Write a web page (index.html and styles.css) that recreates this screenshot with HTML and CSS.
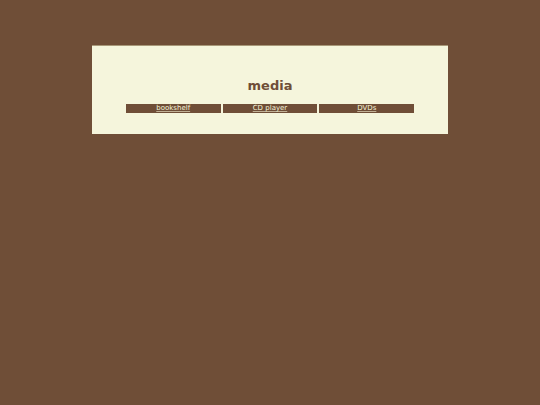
FILE: index.html
```
<!DOCTYPE html>
<html lang="en">
<head>
	<meta charset="UTF-8">
	<title>media</title>
	<link rel="stylesheet" href="styles.css">
</head>
<body>
	<div class="content">
		<h1>media</h1>
		<ul class="nav">
			<li><a href="#">bookshelf</a></li>
			<li><a href="#">CD player</a></li>
			<li><a href="#">DVDs</a></li>
		</ul>
	</div>
</body>
</html>
```

FILE: styles.css
```
*{padding:0;margin:0;}
body{
	padding:45px 17%;
	background:#6f4e37;
	color:#6f4e37;
	font-family:"DejaVu Sans",Verdana,sans-serif;
}
.content{
	padding:32px 34px 21px;
	border-top:1px solid #a89878;
	background:#f5f5dc;
}
h1{
	margin-bottom:10px;
	font-size:13px;
	line-height:16px;
	text-align:center;
}
.nav{
	display:flex;
	gap:2px;
	list-style:none;
}
.nav li{
	flex:1;
	background:#6f4e37;
	font-size:7px;
	line-height:9px;
	text-align:center;
}
.nav a{
	color:#f5f5dc;
	text-decoration-color:#c0b095;
}
```
